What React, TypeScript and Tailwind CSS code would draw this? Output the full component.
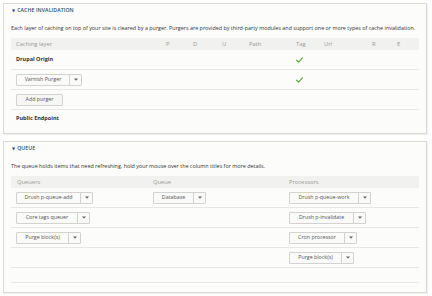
import React from "react";

function Arrow() {
  return (
    <svg width="4" height="3" viewBox="0 0 4 3">
      <path d="M0 0.5h4L2 2.8z" fill="#666" />
    </svg>
  );
}

function SplitButton({ label, main, arrow }: { label: string; main: string; arrow: string }) {
  return (
    <div className="flex h-[12px] border border-[#d2d2d0] bg-[#fafaf8] rounded-[1px]">
      <div className={`${main} flex items-center justify-center text-[5.3px] text-[#555] border-r border-[#d2d2d0]`}>{label}</div>
      <div className={`${arrow} flex items-center justify-center`}>
        <Arrow />
      </div>
    </div>
  );
}

function Check() {
  return (
    <svg width="7" height="6" viewBox="0 0 7 6">
      <path d="M0.6 3.2 L2.6 5.1 L6.4 0.8" stroke="#62a83f" strokeWidth="1.2" fill="none" strokeLinecap="round" strokeLinejoin="round" />
    </svg>
  );
}

const cols = "grid grid-cols-[150px_27px_29px_27px_47px_28px_48px_25px_29px]";

function Summary({ text }: { text: string }) {
  return (
    <div className="h-[14px] flex items-center pl-[1px] text-[5.2px] text-[#1f4d72] font-semibold tracking-[0.1px]">
      <span className="text-[4px] mr-[2px]">▼</span>
      <span>{text}</span>
    </div>
  );
}

export default function App() {
  return (
    <div
      className="w-[432px] h-[296px] bg-white overflow-hidden pt-[3px] pl-[3px]"
      style={{ fontFamily: '"Open Sans", "DejaVu Sans", sans-serif' }}
    >
      {/* Panel 1 */}
      <div className="w-[424px] h-[131px] border border-[#d9d9d6] bg-[#fcfcfa] shadow-[1px_1px_1px_rgba(0,0,0,0.06)] px-[7px]">
        <Summary text="CACHE INVALIDATION" />
        <div className="mt-[3px] h-[14px] flex items-center text-[5.4px] text-[#333] whitespace-nowrap">
          Each layer of caching on top of your site is cleared by a purger. Purgers are provided by third-party modules and support one or more types of cache invalidation.
        </div>
        <div className={`mt-[3px] h-[12px] ${cols} items-center bg-[#f1f1ef] text-[5.8px] text-[#999]`}>
          <div className="pl-[5px]">Caching layer</div>
          <div className="pl-[5px]">P</div>
          <div className="pl-[5px]">D</div>
          <div className="pl-[5px]">U</div>
          <div className="pl-[5px]">Path</div>
          <div className="pl-[5px]">Tag</div>
          <div className="pl-[5px]">Url</div>
          <div className="pl-[5px]">R</div>
          <div className="pl-[5px]">E</div>
        </div>
        <div className={`h-[20px] ${cols} items-center border-b border-[#e8e7e3]`}>
          <div className="pl-[5px] text-[5.5px] font-bold text-[#333]">Drupal Origin</div>
          <div /><div /><div /><div />
          <div className="pl-[5px] flex"><Check /></div>
          <div /><div /><div />
        </div>
        <div className={`h-[20px] ${cols} items-center border-b border-[#e8e7e3]`}>
          <div className="pl-[5px] flex">
            <SplitButton label="Varnish Purger" main="w-[53px]" arrow="w-[11px]" />
          </div>
          <div /><div /><div /><div />
          <div className="pl-[5px] flex"><Check /></div>
          <div /><div /><div />
        </div>
        <div className="h-[20px] flex items-center border-b border-[#e8e7e3] pl-[5px]">
          <div className="h-[12px] w-[47px] flex items-center justify-center border border-[#d2d2d0] bg-[#f6f6f4] rounded-[1px] text-[5.3px] text-[#555]">
            Add purger
          </div>
        </div>
        <div className="h-[16px] flex items-center pl-[5px] text-[5.5px] font-bold text-[#333]">Public Endpoint</div>
      </div>

      {/* Panel 2 */}
      <div className="mt-[7px] w-[424px] h-[152px] border border-[#d9d9d6] bg-[#fcfcfa] shadow-[1px_1px_1px_rgba(0,0,0,0.06)] px-[7px]">
        <Summary text="QUEUE" />
        <div className="mt-[3px] h-[14px] flex items-center text-[5.4px] text-[#333] whitespace-nowrap">
          The queue holds items that need refreshing, hold your mouse over the column titles for more details.
        </div>
        <div className="mt-[3px] h-[12px] grid grid-cols-[137px_136px_137px] items-center bg-[#f1f1ef] text-[5.8px] text-[#999]">
          <div className="pl-[6px]">Queuers</div>
          <div className="pl-[5px]">Queue</div>
          <div className="pl-[5px]">Processors</div>
        </div>
        <div className="h-[20px] grid grid-cols-[137px_136px_137px] items-center border-b border-[#e8e7e3]">
          <div className="pl-[5px] flex"><SplitButton label="Drush p-queue-add" main="w-[64px]" arrow="w-[11px]" /></div>
          <div className="pl-[5px] flex"><SplitButton label="Database" main="w-[40px]" arrow="w-[11px]" /></div>
          <div className="pl-[5px] flex"><SplitButton label="Drush p-queue-work" main="w-[69px]" arrow="w-[11px]" /></div>
        </div>
        <div className="h-[20px] grid grid-cols-[137px_136px_137px] items-center border-b border-[#e8e7e3]">
          <div className="pl-[5px] flex"><SplitButton label="Core tags queuer" main="w-[61px]" arrow="w-[11px]" /></div>
          <div />
          <div className="pl-[5px] flex"><SplitButton label="Drush p-invalidate" main="w-[64px]" arrow="w-[11px]" /></div>
        </div>
        <div className="h-[20px] grid grid-cols-[137px_136px_137px] items-center border-b border-[#e8e7e3]">
          <div className="pl-[5px] flex"><SplitButton label="Purge block(s)" main="w-[52px]" arrow="w-[11px]" /></div>
          <div />
          <div className="pl-[5px] flex"><SplitButton label="Cron processor" main="w-[55px]" arrow="w-[11px]" /></div>
        </div>
        <div className="h-[20px] grid grid-cols-[137px_136px_137px] items-center border-b border-[#e8e7e3]">
          <div />
          <div />
          <div className="pl-[5px] flex"><SplitButton label="Purge block(s)" main="w-[52px]" arrow="w-[11px]" /></div>
        </div>
        <div className="h-[15px] border-b border-[#e8e7e3]" />
      </div>
    </div>
  );
}
